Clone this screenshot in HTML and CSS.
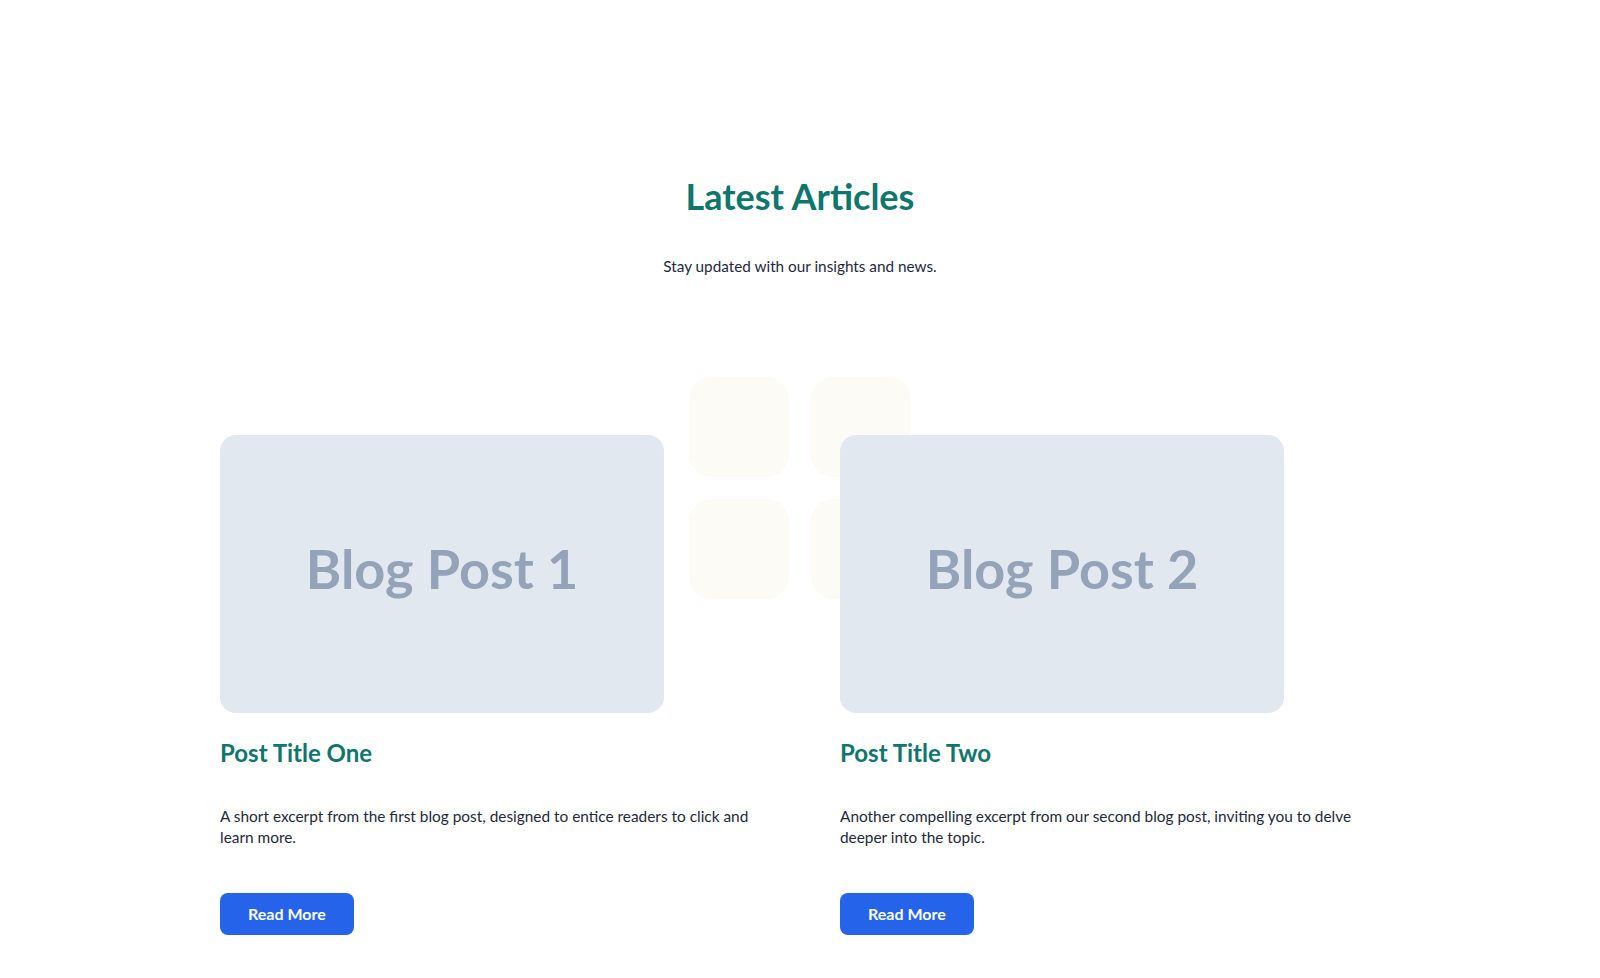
FILE: index.html
```html
<!DOCTYPE html>
<html lang="en">
<head>
    <meta charset="UTF-8">
    <meta name="viewport" content="width=device-width, initial-scale=1.0">
    <title>Latest Articles</title>
    <link rel="stylesheet" href="styles.css">
</head>
<body>
    <section class="blog">
        <h2 class="blog-title">Latest Articles</h2>
        <p class="blog-subtitle">Stay updated with our insights and news.</p>

        <div class="posts">
            <div class="deco">
                <span></span>
                <span></span>
                <span></span>
                <span></span>
            </div>

            <article class="post">
                <div class="post-image"><span>Blog Post 1</span></div>
                <h3 class="post-title">Post Title One</h3>
                <p class="post-excerpt">A short excerpt from the first blog post, designed to entice readers to click and learn more.</p>
                <a href="#" class="btn">Read More</a>
            </article>

            <article class="post">
                <div class="post-image"><span>Blog Post 2</span></div>
                <h3 class="post-title">Post Title Two</h3>
                <p class="post-excerpt">Another compelling excerpt from our second blog post, inviting you to delve deeper into the topic.</p>
                <a href="#" class="btn">Read More</a>
            </article>
        </div>
    </section>
</body>
</html>
```

FILE: styles.css
```css
* {
    box-sizing: border-box;
}
body {
    margin: 0;
    background: #ffffff;
    font-family: Lato, "Open Sans", sans-serif;
    color: #1e293b;
}
.blog {
    padding: 175px 20px 40px;
}
.blog-title {
    margin: 0;
    text-align: center;
    font-size: 36px;
    line-height: 1.2;
    font-weight: 700;
    color: #0f766e;
}
.blog-subtitle {
    margin: 36px 0 0;
    text-align: center;
    font-size: 15.3px;
    line-height: 24px;
    color: #1e293b;
}
.posts {
    position: relative;
    max-width: 1160px;
    margin: 157px auto 0;
    display: grid;
    grid-template-columns: 1fr 1fr;
    column-gap: 80px;
}
.deco {
    position: absolute;
    top: -58px;
    left: 50%;
    margin-left: -111px;
    display: grid;
    grid-template-columns: 100px 100px;
    grid-auto-rows: 100px;
    gap: 22px;
    z-index: 0;
}
.deco span {
    background: #fcfbf6;
    border-radius: 22px;
}
.post {
    position: relative;
    z-index: 1;
    display: flex;
    flex-direction: column;
    align-items: flex-start;
}
.post-image {
    width: 444px;
    aspect-ratio: 16 / 10;
    background: #e2e8f0;
    border-radius: 16px;
    display: flex;
    align-items: center;
    justify-content: center;
    padding-bottom: 11px;
}
.post-image span {
    font-family: Lato, sans-serif;
    font-size: 54px;
    font-weight: 700;
    color: #94a3b8;
}
.post-title {
    margin: 24px 0 0;
    font-size: 24px;
    line-height: 1.3;
    font-weight: 700;
    color: #0f766e;
}
.post-excerpt {
    margin: 38px 0 0;
    font-size: 15.4px;
    line-height: 21px;
    color: #1e293b;
}
.btn {
    margin-top: 45px;
    display: inline-block;
    padding: 12px 28px;
    font-size: 16px;
    line-height: 18px;
    font-weight: 700;
    color: #ffffff;
    background: #2563eb;
    border-radius: 8px;
    text-decoration: none;
}
```
